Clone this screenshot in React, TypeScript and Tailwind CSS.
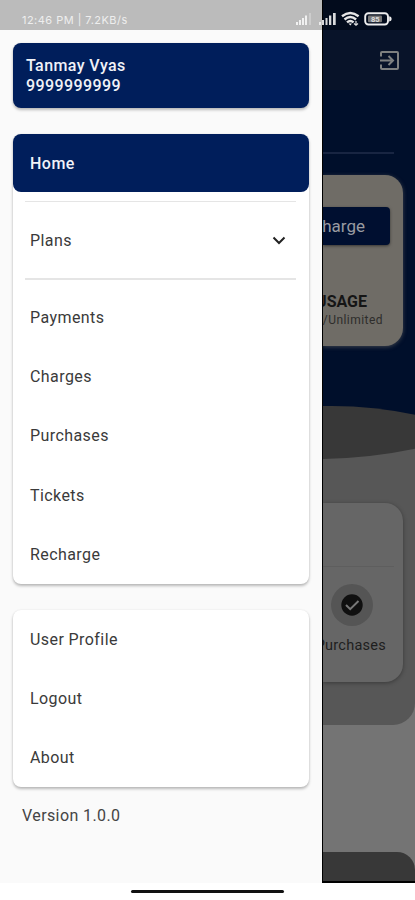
import React from "react";

const links = ["Payments", "Charges", "Purchases", "Tickets", "Recharge"];
const account = ["User Profile", "Logout", "About"];
const cardShadow = "shadow-[0_2px_3px_rgba(0,0,0,0.26),0_0_2px_rgba(0,0,0,0.08)]";

function MenuItem({ label }: { label: string }) {
  return (
    <div className="flex h-[59.2px] items-center pl-[17px] pt-px text-[16px] tracking-[0.42px] text-[#3a3a3a]">
      {label}
    </div>
  );
}

function StatusBar() {
  return (
    <div className="absolute inset-x-0 top-0 z-10 flex h-[30px] items-start justify-between pl-[22px] pr-[23px]">
      <span className="mt-[13px] whitespace-pre font-['Inter'] text-[11px] leading-[15px] tracking-[0.47px] text-[#eeeeee]">
        12:46 PM | 7.2KB/s
      </span>
      <svg className="mt-[10px]" width="97" height="18" viewBox="295 10 97 18" fill="none">
        <g fill="#f1f1f1">
          <path d="M296 22h2v3h-2zM299 20h2v5h-2zM302 18h2v7h-2zM305 15.500h2v9.500h-2z" />
          <path d="M309 13h2v12h-2z" opacity=".35" />
          <path d="M319 22h2v3h-2zM322 20h2v5h-2zM325.500 18h2v7h-2zM329 15.500h2.300v9.500h-2.300zM333 13h2.700v12H333z" opacity=".9" />
        </g>
        <g stroke="#e6e6e6" strokeWidth="2.400">
          <path d="M342 16.300q8.300-6.500 16.600 0" />
          <path d="M344.500 19.500q5.800-5 11.600 0" />
          <path d="M347 22.300q3.300-2.800 6.600 0" />
        </g>
        <path d="M348.500 23.500h3.500l-1.700 2z" fill="#eee" />
        <path d="M356 21v4M354 23.500l2 1.700 2-1.700" stroke="#ddd" strokeWidth="1.200" />
        <rect x="365.200" y="13.200" width="22.800" height="11.300" rx="3.200" stroke="#eeeeee" strokeWidth="1.900" />
        <rect x="368" y="15.500" width="14" height="6.800" rx="1" fill="#777" />
        <text x="371" y="22" fill="#dddddd" fontSize="7.500" fontWeight="700" fontFamily="Roboto, sans-serif">85</text>
        <path d="M389.200 16.300q2.500.4 2.500 2.600t-2.500 2.600z" fill="#eeeeee" />
      </svg>
    </div>
  );
}

function Drawer() {
  return (
    <aside className="flex w-[322px] shrink-0 flex-col bg-[#fafafa]">
      <div className="h-[30px] shrink-0 bg-[#bbbbbb]" />
      <div className={`mx-[13px] mt-[13px] h-[65px] rounded-[8px] bg-[#001e5b] pl-[13px] pt-[12.500px] text-[16px] font-medium leading-[20.500px] text-[#f0f2f8] ${cardShadow}`}>
        <div className="tracking-[0.4px]">Tanmay Vyas</div>
        <div className="tracking-[0.4px]">9999999999</div>
      </div>
      <nav className={`mx-[13px] mt-[26px] flex h-[450px] flex-col rounded-[8px] bg-white ${cardShadow}`}>
        <div className="flex h-[58px] shrink-0 items-center rounded-[8px] bg-[#001e5b] pl-[17px] pt-[2px] text-[16px] font-medium tracking-[0.5px] text-[#f0f2f8]">
          Home
        </div>
        <div className="ml-[12px] mr-[13px] mt-[9px] flex h-[79px] shrink-0 items-center justify-between border-y border-b-2 border-[#e5e5e5] pl-[5px] pr-[10px] pt-px">
          <span className="text-[16px] tracking-[0.42px] text-[#3a3a3a]">Plans</span>
          <svg width="14" height="9" viewBox="0 0 14 9" fill="none" stroke="#222" strokeWidth="2">
            <path d="M1.500 1.500 7 7l5.500-5.500" />
          </svg>
        </div>
        <div className="mt-[8px]">
          {links.map((label) => <MenuItem key={label} label={label} />)}
        </div>
      </nav>
      <div className={`mx-[13px] mt-[26px] flex h-[177px] flex-col rounded-[8px] bg-white ${cardShadow}`}>
        <div className="-mt-[0.500px]">
          {account.map((label) => <MenuItem key={label} label={label} />)}
        </div>
      </div>
      <div className="ml-[22px] mt-[19px] text-[16px] leading-[20px] tracking-[0.4px] text-[#444444]">
        Version 1.0.0
      </div>
    </aside>
  );
}

function DimmedPage() {
  return (
    <main className="flex min-w-0 flex-1 flex-col overflow-hidden border-b-2 border-l border-black bg-[#747474]">
      <div className="h-[30px] shrink-0 bg-[#020b1c]" />
      <header className="flex h-[60px] shrink-0 items-center justify-end bg-[#081329] pr-[15px]">
        <svg width="21" height="21" viewBox="0 0 21 21" fill="none" stroke="#7e8080" strokeWidth="2">
          <path d="M2 6.500V3q0-1 1-1h15q1 0 1 1v15q0 1-1 1H3q-1 0-1-1v-3.500M1 10.500h12M9.500 6l4.500 4.500L9.500 15" />
        </svg>
      </header>
      <section className="flex h-[310px] shrink-0 flex-col bg-[#000f2b]">
        <div className="mr-[21px] mt-[62px] h-[2px] shrink-0 bg-[#182542]" />
        <div className="mr-[12px] mt-[21px] flex h-[171px] shrink-0 flex-col items-end rounded-r-[18px] bg-[#6f6c66] shadow-[0_1px_4px_rgba(110,108,102,0.55)]">
          <div className="mr-[13px] mt-[32px] flex h-[38px] w-[67px] shrink-0 items-center justify-end rounded-r-[4px] bg-[#000f30] pr-[25px] pt-px text-[17px] text-[#999ba1] shadow-[0_1px_3px_rgba(0,0,0,0.5)]">
            <span className="whitespace-nowrap">Recharge</span>
          </div>
          <div className="mr-[36px] mt-[47px] flex w-[44px] justify-end whitespace-nowrap text-[16px] font-bold leading-[20px] text-[#151515]">
            USAGE
          </div>
          <div className="mr-[20px] mt-[1px] whitespace-nowrap text-[12px] leading-[15px] tracking-[0.45px] text-[#2e2d2b]">
            /Unlimited
          </div>
        </div>
      </section>
      <svg className="shrink-0" width="93" height="60" viewBox="0 0 93 60">
        <rect width="93" height="60" fill="#000f2b" />
        <path d="M0 6Q48 5 93 15V60H0z" fill="#383838" />
        <path d="M0 59Q48 58 93 48.500V60H0z" fill="#575757" />
      </svg>
      <section className="h-[265px] shrink-0 rounded-br-[22px] bg-[#575757]">
        <div className="h-[43px]" />
        <div className="mr-[12px] flex h-[179px] flex-col items-end rounded-r-[18px] bg-[#666666] shadow-[0_1px_4px_rgba(0,0,0,0.35)]">
          <div className="mr-[9px] mt-[63px] h-px w-[71px] bg-[#5e5e5e]" />
          <div className="mr-[30px] mt-[17px] flex size-[42px] items-center justify-center rounded-full bg-[#555555]">
            <svg width="22" height="22" viewBox="0 0 22 22" fill="none">
              <circle cx="11" cy="11" r="10.700" fill="#101010" />
              <path d="M5 11 9.200 15.200 17.500 7" stroke="#777" strokeWidth="2" />
            </svg>
          </div>
          <div className="mr-[17px] mt-[10px] flex w-[63px] justify-end whitespace-nowrap text-[14.500px] leading-[20px] tracking-[0.25px] text-[#1e1e1e]">
            Purchases
          </div>
        </div>
      </section>
      <div className="flex-1" />
      <div className="h-[29px] shrink-0 rounded-tr-[18px] bg-[#383838]" />
    </main>
  );
}

export default function App() {
  return (
    <div className="relative flex h-[900px] w-[415px] flex-col overflow-hidden bg-white font-['Roboto',sans-serif]">
      <StatusBar />
      <div className="flex h-[883px] shrink-0">
        <Drawer />
        <DimmedPage />
      </div>
      <div className="flex flex-1 justify-center">
        <div className="mt-[7px] h-[3px] w-[153px] rounded-full bg-[#111]" />
      </div>
    </div>
  );
}
